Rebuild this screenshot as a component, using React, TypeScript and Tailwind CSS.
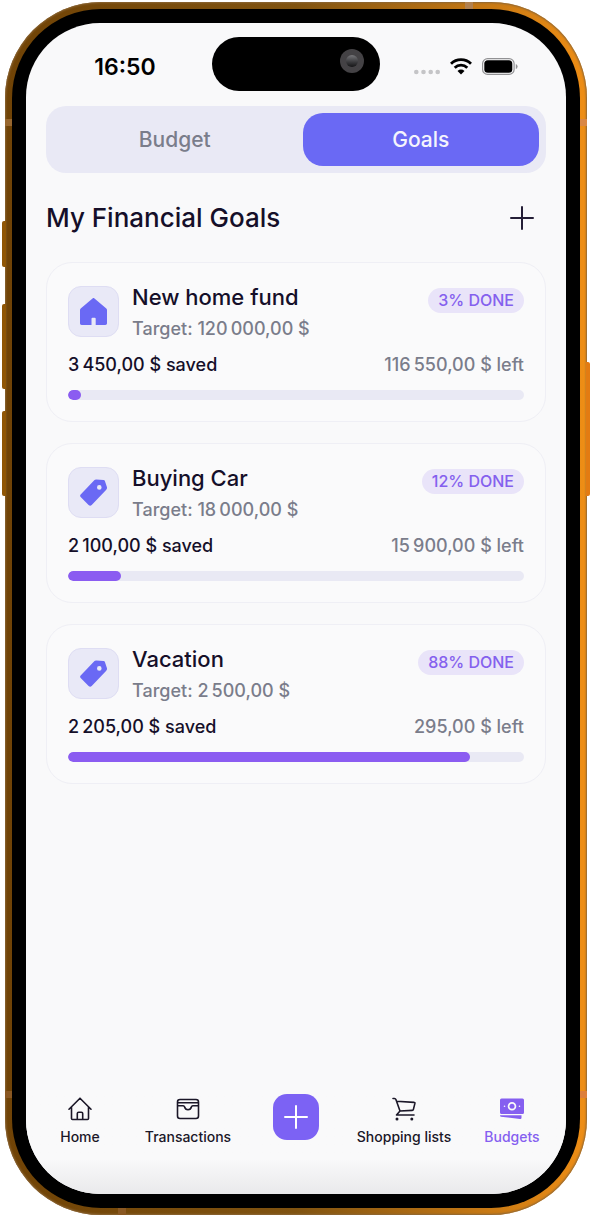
import type { ReactNode } from "react";

type Goal = {
  name: string;
  target: string;
  saved: string;
  left: string;
  percent: number;
  fill: number;
  icon: ReactNode;
};

function HomeSolid() {
  return (
    <svg viewBox="0 0 27 27" className="size-[27px] fill-[#6a69f4]" aria-hidden="true">
      <path d="M12.5.4a1.500 1.500 0 0 1 2 0l11.800 10c.5.4.7.9.7 1.500v13.400c0 1-.7 1.700-1.700 1.700h-9.600v-6.300a1 1 0 0 0-1-1h-2.200a1 1 0 0 0-1 1V27H1.700C.7 27 0 26.300 0 25.300V11.900c0-.6.2-1.100.7-1.500z" />
    </svg>
  );
}

function TagSolid() {
  return (
    <svg viewBox="0 0 27 27" className="size-[27px] fill-[#6a69f4]" aria-hidden="true">
      <path
        fillRule="evenodd"
        d="M14.500 1q.7-.7 1.700-.6l7.400.5q1 .1 1.300 1l2 6.100q.3 1-.1 1.700-.3.800-1 1.500L11.700 26q-1.500 1.600-3.100 0L.9 18.300q-1.600-1.600 0-3.100zM19.300 6.100a2.300 2.300 0 1 0 0 4.600 2.300 2.300 0 0 0 0-4.600z"
      />
    </svg>
  );
}

function PlusIcon({ className }: { className: string }) {
  return (
    <svg viewBox="0 0 24 24" className={className} fill="none" strokeLinecap="round" aria-hidden="true">
      <path d="M12 1v22M1 12h22" />
    </svg>
  );
}

function HomeOutline() {
  return (
    <svg viewBox="0 0 24 24" className="size-6" fill="none" stroke="currentColor" strokeWidth="1.6" strokeLinecap="round" strokeLinejoin="round" aria-hidden="true">
      <path d="M1 12.200 12 1.200l11 11M3.500 10v11.500q0 1 1 1h15q1 0 1-1V10M9.300 22.500v-6q0-1.300 1.300-1.300h2.800q1.300 0 1.300 1.300v6" />
    </svg>
  );
}

function WalletOutline() {
  return (
    <svg viewBox="0 0 24 24" className="size-6" fill="none" stroke="currentColor" strokeWidth="1.6" strokeLinejoin="round" aria-hidden="true">
      <rect x="1.500" y="2.500" width="21" height="19" rx="2.500" />
      <path d="M1.500 5.800h21M1.500 8.800h5.700q1 0 1.300 1 .8 3 3.500 3t3.500-3q.3-1 1.300-1h5.700" />
    </svg>
  );
}

function CartOutline() {
  return (
    <svg viewBox="0 0 24 24" className="size-6" fill="none" stroke="currentColor" strokeWidth="1.6" strokeLinecap="round" strokeLinejoin="round" aria-hidden="true">
      <path d="M1 1.500h1.500q1 0 1.400 1l4.100 11.500M4.500 4.300l17.500 1.100q1 0 .9 1l-1.500 6q-.2 1-1.200 1L8 14l-3.500 4H22" />
      <circle cx="5" cy="22" r="1.500" fill="currentColor" stroke="none" />
      <circle cx="19.800" cy="22" r="1.500" fill="currentColor" stroke="none" />
    </svg>
  );
}

function BanknotesSolid() {
  return (
    <svg viewBox="0 0 24 24" className="size-6" fill="currentColor" aria-hidden="true">
      <path fillRule="evenodd" d="M1.500 1.500h21q1.500 0 1.500 1.500v12.500q0 1.500-1.500 1.500h-21Q0 17 0 15.500V3q0-1.500 1.500-1.500zM12 5a4.300 4.300 0 1 0 0 8.600A4.300 4.300 0 0 0 12 5zM4.500 8.500a.8.8 0 1 0 0 1.600.8.800 0 0 0 0-1.600zm15 0a.8.8 0 1 0 0 1.600.8.800 0 0 0 0-1.600z" />
      <circle cx="12" cy="9.300" r="2.500" />
      <path d="M0 18.300h21.500v2.500q0 1.400-1.500 1.200L.9 19.800Q0 19.600 0 18.300z" />
    </svg>
  );
}

const goals: Goal[] = [
  {
    name: "New home fund",
    target: "120\u202f000,00 $",
    saved: "3\u202f450,00 $",
    left: "116\u202f550,00 $",
    percent: 3,
    fill: 2.9,
    icon: <HomeSolid />,
  },
  {
    name: "Buying Car",
    target: "18\u202f000,00 $",
    saved: "2\u202f100,00 $",
    left: "15\u202f900,00 $",
    percent: 12,
    fill: 11.67,
    icon: <TagSolid />,
  },
  {
    name: "Vacation",
    target: "2\u202f500,00 $",
    saved: "2\u202f205,00 $",
    left: "295,00 $",
    percent: 88,
    fill: 88.2,
    icon: <TagSolid />,
  },
];

function GoalCard({ goal }: { goal: Goal }) {
  return (
    <li className="flex flex-col rounded-[26px] border border-[#efeff5] bg-[#fafafb] px-[21px] pt-[23px] pb-[21px]">
      <div className="flex items-start gap-[13px]">
        <div className="flex size-[51px] shrink-0 items-center justify-center rounded-[13px] border border-[#deddf3] bg-[#e9e9f7]">
          {goal.icon}
        </div>
        <div className="-mt-1 min-w-0 flex-1">
          <h2 className="text-[22px] leading-[30px] font-medium text-[#150f29]">{goal.name}</h2>
          <p className="mt-1 text-[18px] leading-[26px] font-medium text-[#7a7d8b]">Target: {goal.target}</p>
        </div>
        <span className="mt-[2px] rounded-full bg-[#e9e4f9] px-[10px] text-[16px] leading-[25px] font-medium whitespace-nowrap text-[#8460ee]">
          {goal.percent}% DONE
        </span>
      </div>
      <div className="mt-[10px] flex justify-between text-[18px] leading-[26px] font-medium">
        <span className="text-[#150f29]">{goal.saved} saved</span>
        <span className="text-[#7a7d8b]">{goal.left} left</span>
      </div>
      <div
        role="progressbar"
        aria-label={goal.name}
        aria-valuenow={goal.percent}
        aria-valuemin={0}
        aria-valuemax={100}
        className="mt-3 h-[10px] overflow-hidden rounded-full bg-[#e9e9f4]"
      >
        <div className="h-full rounded-full bg-[#8b5cf1]" style={{ width: `${goal.fill}%` }} />
      </div>
    </li>
  );
}

function StatusBar() {
  return (
    <div className="grid grid-cols-[1fr_168px_1fr] pt-[14px]">
      <div className="flex items-center justify-center pt-[6px] pl-3 text-[23px] font-semibold text-black">16:50</div>
      <div className="flex h-[54px] items-start justify-end rounded-full bg-black pt-3 pr-4">
        <div className="flex size-6 items-center justify-center rounded-full bg-[#444245]">
          <div className="size-3 rounded-full bg-linear-to-b from-[#77777b] to-[#151517]" />
        </div>
      </div>
      <div className="flex items-center justify-end gap-[10px] pt-1 pr-12">
        <svg viewBox="0 0 26 18" className="h-[18px] w-[26px] fill-[#c5c5c7]" aria-hidden="true">
          <circle cx="2.300" cy="15" r="2.300" />
          <circle cx="9.500" cy="15" r="2.300" />
          <circle cx="16.700" cy="15" r="2.300" />
          <circle cx="23.700" cy="15" r="2.300" />
        </svg>
        <svg viewBox="0 0 22 17" className="h-[17px] w-[22px]" fill="none" stroke="black" strokeWidth="2.800" aria-hidden="true">
          <path d="M1 5.800a14.300 14.300 0 0 1 20 0M4.700 9.700a9 9 0 0 1 12.600 0" />
          <path d="M11 16.500 7.500 13a5 5 0 0 1 7 0z" fill="black" stroke="none" />
        </svg>
        <svg viewBox="0 0 36 17" className="h-[17px] w-9" fill="none" aria-hidden="true">
          <rect x=".6" y=".6" width="31.500" height="15.800" rx="5" stroke="#929294" strokeWidth="1.200" />
          <rect x="2.300" y="2.300" width="28" height="12.400" rx="3.500" fill="black" />
          <path d="M33.800 6q1.800.5 1.800 2.500t-1.800 2.500z" fill="#929294" />
        </svg>
      </div>
    </div>
  );
}

const navItem = "flex flex-col items-center gap-2 pt-[3px] text-[14px] leading-4 font-medium whitespace-nowrap";

function BottomNav() {
  return (
    <nav aria-label="Main" className="grid grid-cols-5 bg-linear-to-b from-[#f9f9fa] from-65% to-[#e9e9eb] pb-[49px]">
      <a href="#home" className={`${navItem} text-[#1b1728]`}>
        <HomeOutline />
        Home
      </a>
      <a href="#transactions" className={`${navItem} text-[#1b1728]`}>
        <WalletOutline />
        Transactions
      </a>
      <button
        type="button"
        aria-label="Add transaction"
        className="flex size-[46px] items-center justify-center justify-self-center rounded-[14px] bg-[#7c62f4]"
      >
        <PlusIcon className="size-6 stroke-white stroke-2" />
      </button>
      <a href="#lists" className={`${navItem} text-[#1b1728]`}>
        <CartOutline />
        Shopping lists
      </a>
      <a href="#budgets" aria-current="page" className={`${navItem} text-[#855ff0]`}>
        <BanknotesSolid />
        Budgets
      </a>
    </nav>
  );
}

export default function App() {
  return (
    <div className="flex min-h-screen bg-white px-[5px] pt-[2px] pb-[3px] font-['Inter','Liberation_Sans',sans-serif]">
      <div className="relative flex flex-1 rounded-[96px] bg-linear-to-r from-[#704306] via-[#805310] to-[#ef8e15] p-[7px] shadow-[inset_0_0_2px_1px_#8b6637]">
        <div className="absolute top-[219px] -left-[3px] h-[46px] w-1 rounded-l-[2px] bg-[#8f5606]" />
        <div className="absolute top-[302px] -left-[3px] h-[85px] w-1 rounded-l-[2px] bg-[#8f5606]" />
        <div className="absolute top-[409px] -left-[3px] h-[85px] w-1 rounded-l-[2px] bg-[#8f5606]" />
        <div className="absolute top-[360px] -right-[3px] h-[134px] w-1 rounded-r-[2px] bg-[#e37b12]" />
        <div className="absolute top-[117px] left-0 h-[7px] w-[7px] bg-[#98672f]" />
        <div className="absolute top-[117px] right-0 h-[7px] w-[7px] bg-[#d98745]" />
        <div className="absolute bottom-[117px] left-0 h-[7px] w-[7px] bg-[#8a5822]" />
        <div className="absolute right-0 bottom-[117px] h-[7px] w-[7px] bg-[#dd7f3b]" />
        <div className="absolute top-0 right-[114px] h-[7px] w-2 bg-[#b18150]" />
        <div className="absolute bottom-0 left-[113px] h-[7px] w-2 bg-[#8a5822]" />
        <div className="flex flex-1 rounded-[89px] bg-black p-[14px]">
          <div className="flex flex-1 flex-col overflow-hidden rounded-[74px] bg-[#f9f9fa]">
            <StatusBar />
            <main className="flex flex-1 flex-col px-5 pt-[15px]">
              <div role="tablist" className="grid grid-cols-[1.03fr_1fr] gap-[6px] rounded-[20px] bg-[#e9e9f5] p-[7px] text-[21px] leading-[27px] font-medium">
                <button type="button" role="tab" aria-selected="false" className="rounded-[20px] py-[13px] text-[#7a7d8b]">
                  Budget
                </button>
                <button type="button" role="tab" aria-selected="true" className="rounded-[20px] bg-[#6a69f4] py-[13px] text-[#f5f4fd]">
                  Goals
                </button>
              </div>
              <div className="mt-7 flex items-center justify-between pr-3">
                <h1 className="text-[26px] leading-[34px] font-medium text-[#150f29]">My Financial Goals</h1>
                <button type="button" aria-label="Add goal">
                  <PlusIcon className="size-6 stroke-[#241e36] stroke-2" />
                </button>
              </div>
              <ul className="mt-[27px] flex flex-col gap-[21px]">
                {goals.map((goal) => (
                  <GoalCard key={goal.name} goal={goal} />
                ))}
              </ul>
            </main>
            <BottomNav />
          </div>
        </div>
      </div>
    </div>
  );
}
